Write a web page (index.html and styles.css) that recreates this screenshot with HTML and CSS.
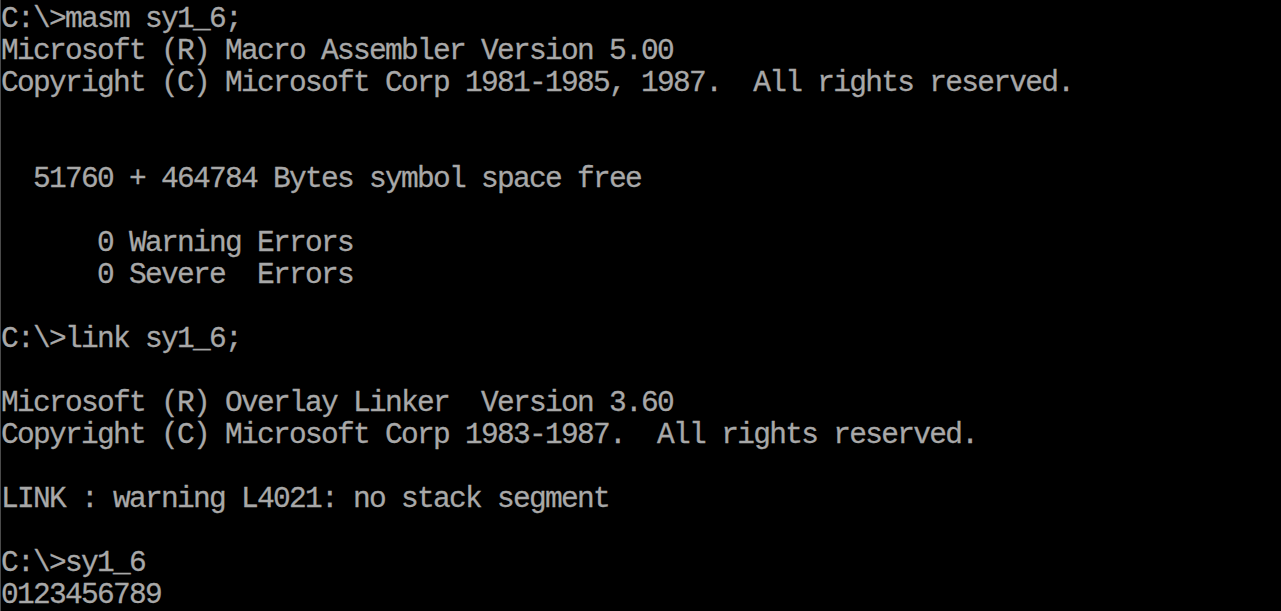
FILE: index.html
```html
<!DOCTYPE html>
<html>
<head>
<meta charset="utf-8">
<link rel="stylesheet" href="styles.css">
</head>
<body>
<div class="screen">
<pre class="console">C:\&gt;masm sy1_6;
Microsoft (R) Macro Assembler Version 5.00
Copyright (C) Microsoft Corp 1981-1985, 1987.  All rights reserved.


  51760 + 464784 Bytes symbol space free

      0 Warning Errors
      0 Severe  Errors

C:\&gt;link sy1_6;

Microsoft (R) Overlay Linker  Version 3.60
Copyright (C) Microsoft Corp 1983-1987.  All rights reserved.

LINK : warning L4021: no stack segment

C:\&gt;sy1_6
0123456789</pre>
</div>
</body>
</html>
```
FILE: styles.css
```css
html, body {
  margin: 0;
  padding: 0;
  background: #000;
}
.screen {
  min-height: 611px;
  border-left: 1px solid #4a4a4a;
  box-sizing: border-box;
  padding-top: 3px;
}
.console {
  margin: 0;
  font-family: "Liberation Mono", "DejaVu Sans Mono", monospace;
  font-size: 29.5px;
  letter-spacing: -1.7px;
  line-height: 32px;
  color: #a8a8a8;
  white-space: pre;
  -webkit-text-stroke: 0.3px #a8a8a8;
}
```
